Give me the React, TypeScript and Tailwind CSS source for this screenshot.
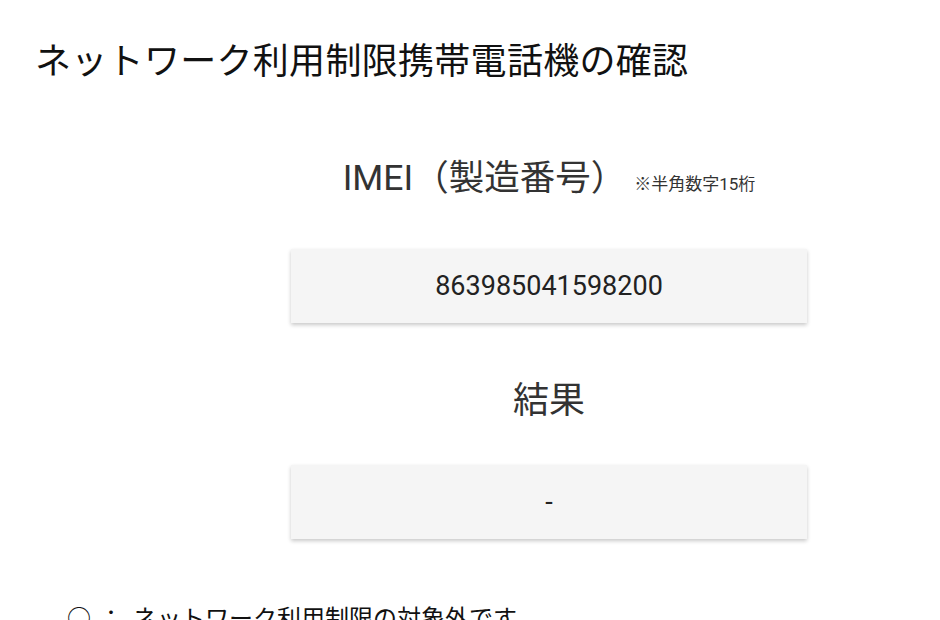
const FONT = "font-['Roboto','Noto_Sans_CJK_JP',sans-serif]";

const ResultBox = ({ value }: { value: string }) => (
  <div className="w-[516px] h-[74px] bg-[#f5f5f5] shadow-[0_2px_4px_rgba(0,0,0,0.22)] flex items-center justify-center text-[27px] text-[#222]">
    {value}
  </div>
);

export default function App() {
  return (
    <div className={`${FONT} w-[940px] h-[620px] overflow-hidden bg-white`}>
      <h1 className="pl-[35px] pt-[39px] text-[36px] leading-[46px] text-[#111] tracking-[0.3px]">
        ネットワーク利用制限携帯電話機の確認
      </h1>
      <div className="pl-[291px] mt-[70px] flex flex-col w-[807px]">
        <div className="flex items-baseline justify-center gap-[8px] text-[#333]">
          <span className="text-[35.5px] leading-[46px]">IMEI（製造番号）</span>
          <span className="text-[17px] leading-none">※半角数字15桁</span>
        </div>
        <div className="mt-[48px]">
          <ResultBox value="863985041598200" />
        </div>
        <div className="mt-[55px] text-center text-[36px] leading-[46px] text-[#333]">結果</div>
        <div className="mt-[41px]">
          <ResultBox value="-" />
        </div>
      </div>
      <div className="pl-[67px] mt-[64px] flex items-center text-[24px] leading-[32px] text-[#111]">
        <span>○</span>
        <span className="ml-[8px]">：</span>
        <span className="ml-[10px]">ネットワーク利用制限の対象外です</span>
      </div>
    </div>
  );
}
